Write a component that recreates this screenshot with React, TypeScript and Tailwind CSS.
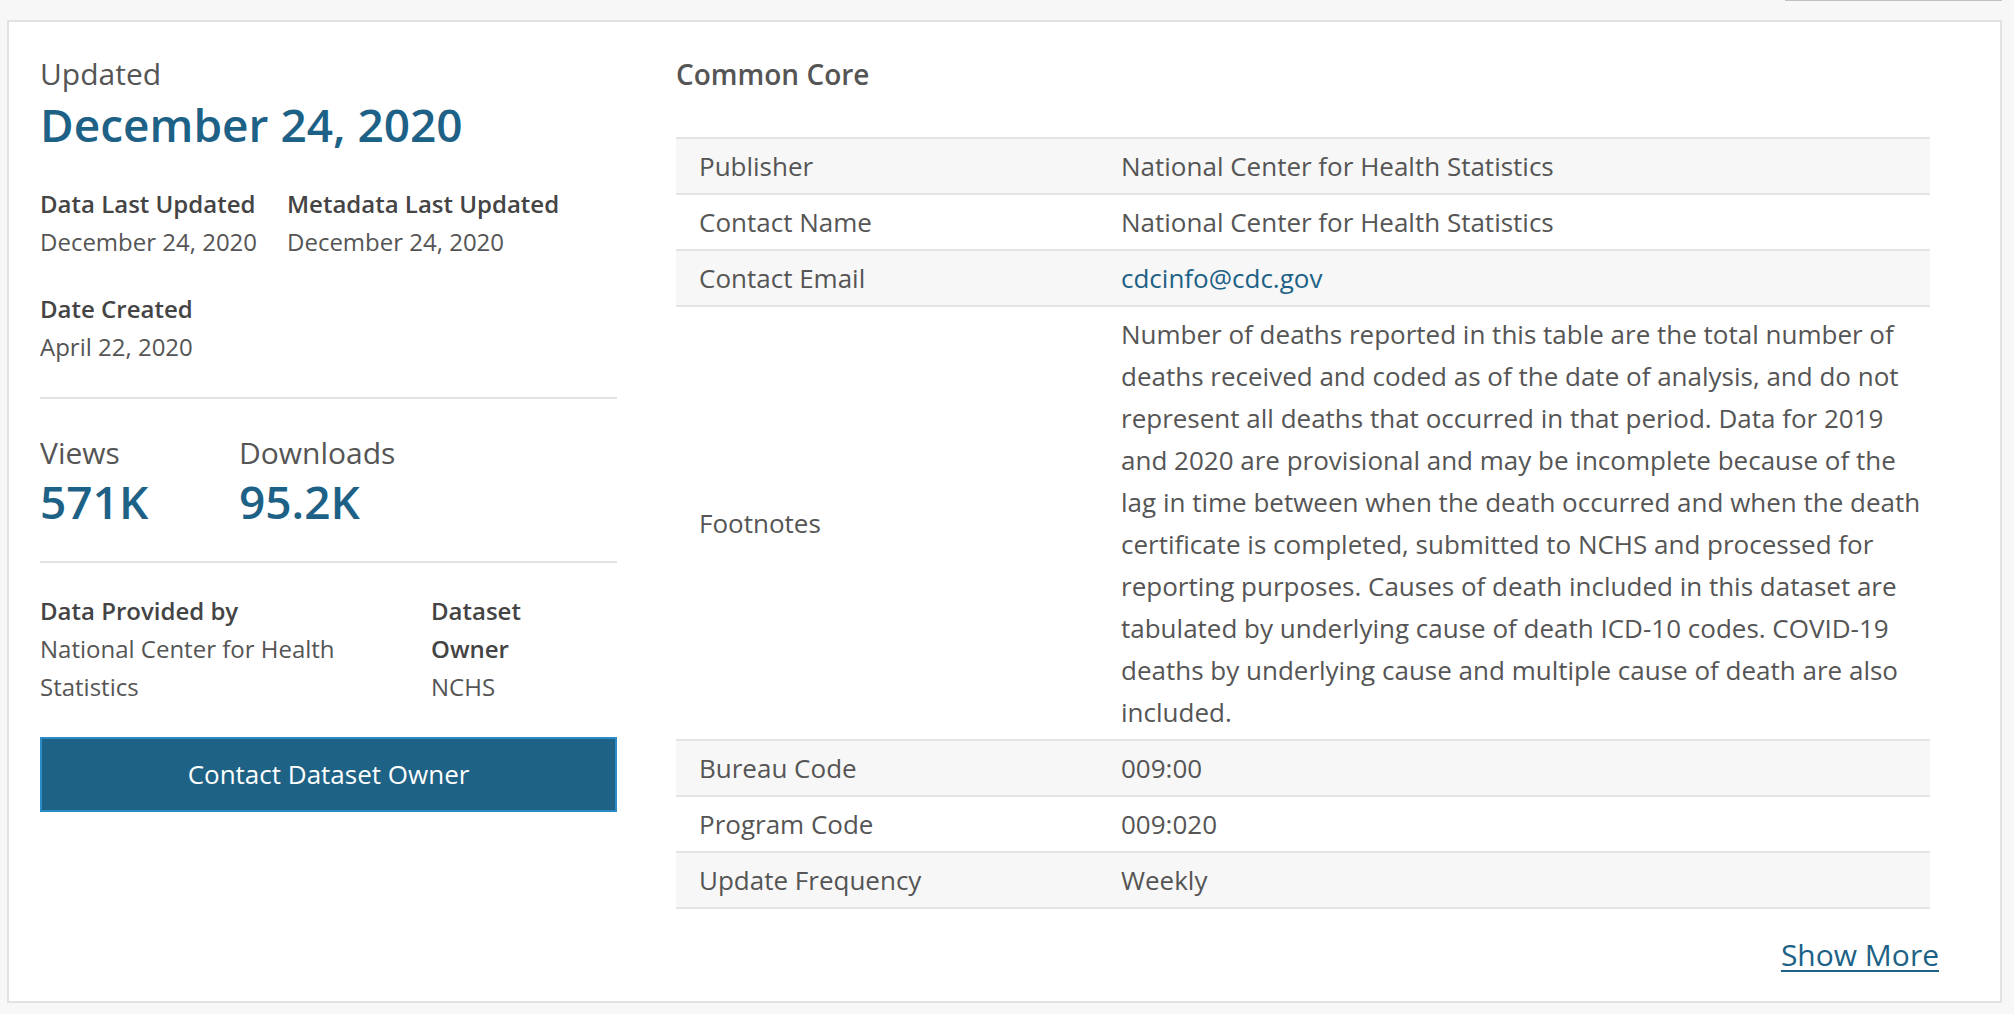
import React from 'react';

const rows: { label: string; value: React.ReactNode }[] = [
  { label: 'Publisher', value: 'National Center for Health Statistics' },
  { label: 'Contact Name', value: 'National Center for Health Statistics' },
  {
    label: 'Contact Email',
    value: <a className="text-[#1d6286]">cdcinfo@cdc.gov</a>,
  },
  {
    label: 'Footnotes',
    value:
      'Number of deaths reported in this table are the total number of deaths received and coded as of the date of analysis, and do not represent all deaths that occurred in that period. Data for 2019 and 2020 are provisional and may be incomplete because of the lag in time between when the death occurred and when the death certificate is completed, submitted to NCHS and processed for reporting purposes. Causes of death included in this dataset are tabulated by underlying cause of death ICD-10 codes. COVID-19 deaths by underlying cause and multiple cause of death are also included.',
  },
  { label: 'Bureau Code', value: '009:00' },
  { label: 'Program Code', value: '009:020' },
  { label: 'Update Frequency', value: 'Weekly' },
];

function Field({ label, value }: { label: string; value: string }) {
  return (
    <div>
      <p className="text-[24px] leading-[38px] font-semibold text-[#444]">{label}</p>
      <p className="text-[24px] leading-[38px] text-[#555]">{value}</p>
    </div>
  );
}

export default function App() {
  return (
    <div className="min-h-screen bg-[#f7f7f7] font-['Open_Sans',sans-serif] pb-[9px]">
      <div className="ml-[1785px] w-[217px] h-px bg-[#c2c2c2]" />
      <div className="mt-[19px] ml-[7px] w-[1995px] border-2 border-[#e2e2e2] bg-white pt-[33px] pl-[31px] pb-[27px] flex gap-[59px]">
        {/* left summary column */}
        <div className="w-[577px] shrink-0">
          <p className="text-[30px] leading-[38px] text-[#555]">Updated</p>
          <p className="mt-[2px] text-[46px] leading-[58px] font-semibold text-[#1d6286]">
            December 24, 2020
          </p>

          <div className="mt-[32px] flex">
            <div className="w-[247px]">
              <Field label="Data Last Updated" value="December 24, 2020" />
            </div>
            <Field label="Metadata Last Updated" value="December 24, 2020" />
          </div>
          <div className="mt-[29px]">
            <Field label="Date Created" value="April 22, 2020" />
          </div>

          <div className="mt-[31px] h-[2px] bg-[#e3e3e3]" />

          <div className="mt-[35px] flex">
            <div className="w-[199px]">
              <p className="text-[30px] leading-[38px] text-[#555]">Views</p>
              <p className="text-[46px] leading-[58px] font-semibold text-[#1d6286]">571K</p>
            </div>
            <div>
              <p className="text-[30px] leading-[38px] text-[#555]">Downloads</p>
              <p className="text-[46px] leading-[58px] font-semibold text-[#1d6286]">95.2K</p>
            </div>
          </div>

          <div className="mt-[31px] h-[2px] bg-[#e3e3e3]" />

          <div className="mt-[29px] flex gap-[21px]">
            <div className="w-[370px]">
              <Field label="Data Provided by" value="National Center for Health Statistics" />
            </div>
            <div className="w-[150px]">
              <Field label="Dataset Owner" value="NCHS" />
            </div>
          </div>

          <button className="mt-[31px] w-full h-[75px] border-2 border-[#2a8bc6] bg-[#1e6285] text-white text-[26px]">
            Contact Dataset Owner
          </button>
        </div>

        {/* common core metadata */}
        <div className="w-[1263px] shrink-0">
          <h2 className="text-[28px] leading-[38px] font-semibold text-[#555]">Common Core</h2>
          <div className="mt-[44px] w-[1254px] border-b-2 border-[#e4e4e4] text-[26px] leading-[42px] text-[#555]">
            {rows.map((row, i) => (
              <div
                key={row.label}
                className={`flex border-t-2 border-[#e4e4e4] ${i % 2 === 0 ? 'bg-[#f7f7f7]' : 'bg-white'}`}
              >
                <div className="w-[445px] shrink-0 pl-[23px] py-[6px] flex items-center">{row.label}</div>
                <div className="flex-1 py-[6px] pr-[8px]">{row.value}</div>
              </div>
            ))}
          </div>
          <div className="mt-[27px] flex justify-end">
            <a className="text-[30px] leading-[38px] text-[#1d6286] underline decoration-2 underline-offset-[4px]">
              Show More
            </a>
          </div>
        </div>
      </div>
    </div>
  );
}
